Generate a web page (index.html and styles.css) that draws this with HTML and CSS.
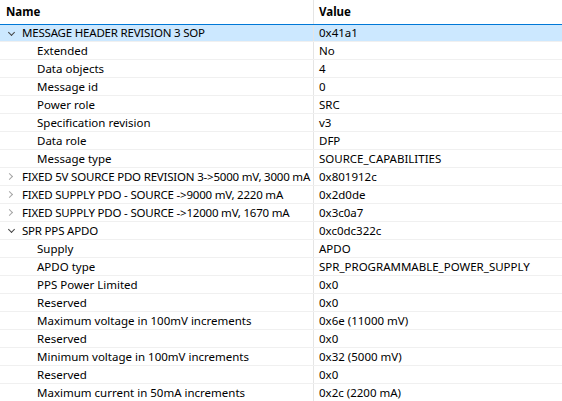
FILE: index.html
```html
<!DOCTYPE html>
<html>
<head>
<meta charset="utf-8">
<link rel="stylesheet" href="styles.css">
</head>
<body>
<div class="tree">
  <div class="row header">
    <div class="name">Name</div>
    <div class="value">Value</div>
  </div>
  <div class="row selected">
    <div class="name lvl0"><span class="chev open"></span>MESSAGE HEADER REVISION 3 SOP</div>
    <div class="value">0x41a1</div>
  </div>
  <div class="row"><div class="name lvl1">Extended</div><div class="value">No</div></div>
  <div class="row"><div class="name lvl1">Data objects</div><div class="value">4</div></div>
  <div class="row"><div class="name lvl1">Message id</div><div class="value">0</div></div>
  <div class="row"><div class="name lvl1">Power role</div><div class="value">SRC</div></div>
  <div class="row"><div class="name lvl1">Specification revision</div><div class="value">v3</div></div>
  <div class="row"><div class="name lvl1">Data role</div><div class="value">DFP</div></div>
  <div class="row"><div class="name lvl1">Message type</div><div class="value">SOURCE_CAPABILITIES</div></div>
  <div class="row"><div class="name lvl0"><span class="chev closed"></span>FIXED 5V SOURCE PDO REVISION 3-&gt;5000 mV, 3000 mA</div><div class="value">0x801912c</div></div>
  <div class="row"><div class="name lvl0"><span class="chev closed"></span>FIXED SUPPLY PDO - SOURCE -&gt;9000 mV, 2220 mA</div><div class="value">0x2d0de</div></div>
  <div class="row"><div class="name lvl0"><span class="chev closed"></span>FIXED SUPPLY PDO - SOURCE -&gt;12000 mV, 1670 mA</div><div class="value">0x3c0a7</div></div>
  <div class="row"><div class="name lvl0"><span class="chev open"></span>SPR PPS APDO</div><div class="value">0xc0dc322c</div></div>
  <div class="row"><div class="name lvl1">Supply</div><div class="value">APDO</div></div>
  <div class="row"><div class="name lvl1">APDO type</div><div class="value">SPR_PROGRAMMABLE_POWER_SUPPLY</div></div>
  <div class="row"><div class="name lvl1">PPS Power Limited</div><div class="value">0x0</div></div>
  <div class="row"><div class="name lvl1">Reserved</div><div class="value">0x0</div></div>
  <div class="row"><div class="name lvl1">Maximum voltage in 100mV increments</div><div class="value">0x6e (11000 mV)</div></div>
  <div class="row"><div class="name lvl1">Reserved</div><div class="value">0x0</div></div>
  <div class="row"><div class="name lvl1">Minimum voltage in 100mV increments</div><div class="value">0x32 (5000 mV)</div></div>
  <div class="row"><div class="name lvl1">Reserved</div><div class="value">0x0</div></div>
  <div class="row"><div class="name lvl1">Maximum current in 50mA increments</div><div class="value">0x2c (2200 mA)</div></div>
</div>
</body>
</html>
```
FILE: styles.css
```css
html, body {
  margin: 0;
  padding: 0;
  background: #ffffff;
}
.tree {
  font-family: "Noto Sans", "Liberation Sans", sans-serif;
  font-size: 11.5px;
  color: #000000;
  width: 562px;
  height: 401px;
  overflow: hidden;
}
.row {
  display: grid;
  grid-template-columns: 314px 1fr;
  height: 18px;
  box-sizing: border-box;
  border-bottom: 1px solid #f0f0f0;
  line-height: 17px;
  white-space: nowrap;
}
.row .name {
  border-right: 1px solid #e5e5e5;
  overflow: hidden;
  display: flex;
  align-items: center;
}
.row .value {
  padding-left: 5px;
}
.header {
  height: 24px;
  line-height: 24px;
  font-weight: bold;
  border-bottom: none;
}
.header .name {
  padding-left: 6px;
}
.header .value {
  padding-left: 5px;
}
.selected {
  background: #cce8ff;
  border-top: 1px solid #0078d7;
  height: 18px;
  line-height: 16px;
}
.lvl0 {
  padding-left: 4px;
  letter-spacing: -0.2px;
}
.lvl1 {
  padding-left: 37px;
}
.chev {
  flex: 0 0 18px;
  width: 18px;
  height: 17px;
  display: inline-block;
  position: relative;
}
.chev::before {
  content: "";
  position: absolute;
  width: 4px;
  height: 4px;
  border-right: 1.3px solid #7a7a7a;
  border-bottom: 1.3px solid #7a7a7a;
}
.chev.open::before {
  left: 5px;
  top: 5px;
  transform: rotate(45deg);
  border-color: #444;
}
.chev.closed::before {
  left: 3px;
  top: 6px;
  transform: rotate(-45deg);
  border-color: #a6a6a6;
}
```
